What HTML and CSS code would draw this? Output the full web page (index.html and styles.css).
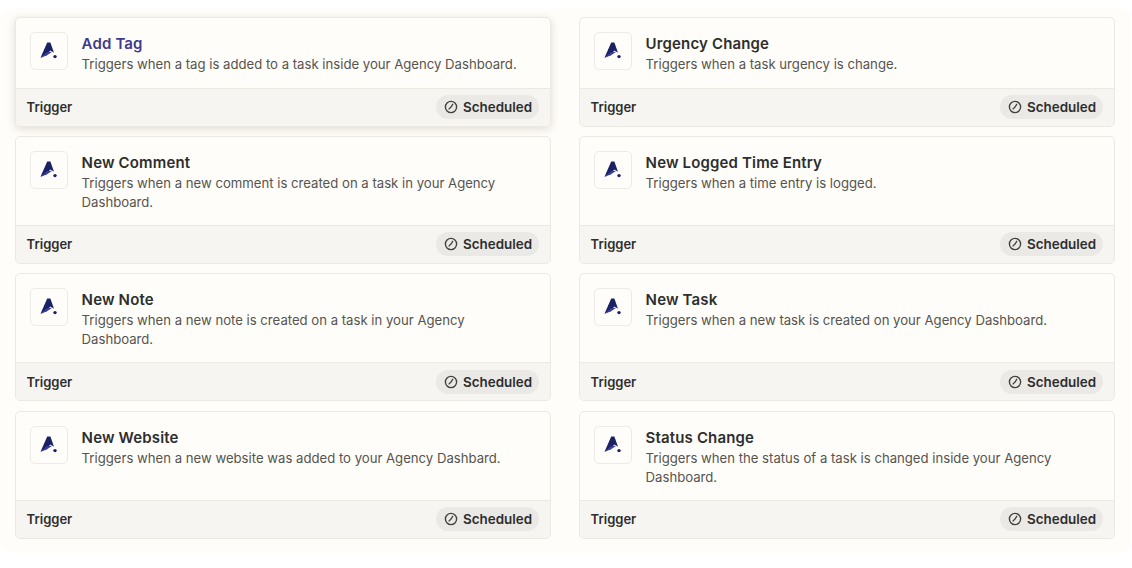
FILE: index.html
```html
<!DOCTYPE html>
<html lang="en">
<head>
<meta charset="utf-8">
<title>Triggers</title>
<link rel="stylesheet" href="styles.css">
</head>
<body>
<svg class="defs" width="0" height="0" aria-hidden="true">
  <defs>
    <symbol id="logo" viewBox="0 0 20 20">
      <path d="M8.2 1.5h3.2l3.6 10.2-3.5-2.2-4.6 4.2-5.4 3z" fill="#1b2264"/>
      <path d="M1.5 17l6.6-6 5.2-.2-5.2 3.4z" fill="#3a3f9e"/>
      <circle cx="16" cy="15.6" r="1.7" fill="#1b2264"/>
    </symbol>
    <symbol id="clock" viewBox="0 0 14 14">
      <circle cx="7" cy="7" r="5.6" fill="none" stroke="currentColor" stroke-width="1.4"/>
      <path d="M9 3.8 7 7 4.6 9.4" fill="none" stroke="currentColor" stroke-width="1.3"/>
    </symbol>
  </defs>
</svg>
<main class="panel">
  <article class="card card-active">
    <div class="card-body">
      <div class="app-icon"><svg class="logo"><use href="#logo"/></svg></div>
      <div class="card-text">
        <h3 class="card-title title-link">Add Tag</h3>
        <p class="card-desc">Triggers when a tag is added to a task inside your Agency Dashboard.</p>
      </div>
    </div>
    <div class="card-foot"><span class="kind">Trigger</span><span class="pill"><svg class="clock"><use href="#clock"/></svg>Scheduled</span></div>
  </article>
  <article class="card">
    <div class="card-body">
      <div class="app-icon"><svg class="logo"><use href="#logo"/></svg></div>
      <div class="card-text">
        <h3 class="card-title">Urgency Change</h3>
        <p class="card-desc">Triggers when a task urgency is change.</p>
      </div>
    </div>
    <div class="card-foot"><span class="kind">Trigger</span><span class="pill"><svg class="clock"><use href="#clock"/></svg>Scheduled</span></div>
  </article>
  <article class="card">
    <div class="card-body">
      <div class="app-icon"><svg class="logo"><use href="#logo"/></svg></div>
      <div class="card-text">
        <h3 class="card-title">New Comment</h3>
        <p class="card-desc">Triggers when a new comment is created on a task in your Agency Dashboard.</p>
      </div>
    </div>
    <div class="card-foot"><span class="kind">Trigger</span><span class="pill"><svg class="clock"><use href="#clock"/></svg>Scheduled</span></div>
  </article>
  <article class="card">
    <div class="card-body">
      <div class="app-icon"><svg class="logo"><use href="#logo"/></svg></div>
      <div class="card-text">
        <h3 class="card-title">New Logged Time Entry</h3>
        <p class="card-desc">Triggers when a time entry is logged.</p>
      </div>
    </div>
    <div class="card-foot"><span class="kind">Trigger</span><span class="pill"><svg class="clock"><use href="#clock"/></svg>Scheduled</span></div>
  </article>
  <article class="card">
    <div class="card-body">
      <div class="app-icon"><svg class="logo"><use href="#logo"/></svg></div>
      <div class="card-text">
        <h3 class="card-title">New Note</h3>
        <p class="card-desc">Triggers when a new note is created on a task in your Agency Dashboard.</p>
      </div>
    </div>
    <div class="card-foot"><span class="kind">Trigger</span><span class="pill"><svg class="clock"><use href="#clock"/></svg>Scheduled</span></div>
  </article>
  <article class="card">
    <div class="card-body">
      <div class="app-icon"><svg class="logo"><use href="#logo"/></svg></div>
      <div class="card-text">
        <h3 class="card-title">New Task</h3>
        <p class="card-desc">Triggers when a new task is created on your Agency Dashboard.</p>
      </div>
    </div>
    <div class="card-foot"><span class="kind">Trigger</span><span class="pill"><svg class="clock"><use href="#clock"/></svg>Scheduled</span></div>
  </article>
  <article class="card">
    <div class="card-body">
      <div class="app-icon"><svg class="logo"><use href="#logo"/></svg></div>
      <div class="card-text">
        <h3 class="card-title">New Website</h3>
        <p class="card-desc">Triggers when a new website was added to your Agency Dashbard.</p>
      </div>
    </div>
    <div class="card-foot"><span class="kind">Trigger</span><span class="pill"><svg class="clock"><use href="#clock"/></svg>Scheduled</span></div>
  </article>
  <article class="card">
    <div class="card-body">
      <div class="app-icon"><svg class="logo"><use href="#logo"/></svg></div>
      <div class="card-text">
        <h3 class="card-title">Status Change</h3>
        <p class="card-desc">Triggers when the status of a task is changed inside your Agency Dashboard.</p>
      </div>
    </div>
    <div class="card-foot"><span class="kind">Trigger</span><span class="pill"><svg class="clock"><use href="#clock"/></svg>Scheduled</span></div>
  </article>
</main>
</body>
</html>
```
FILE: styles.css
```css
* { box-sizing: border-box; }
html, body { margin: 0; padding: 0; background: #fff; }
body {
  font-family: Inter, "Liberation Sans", sans-serif;
  color: #2d2e2e;
  height: 568px;
  overflow: hidden;
  padding-top: 8px;
}
.defs { position: absolute; }
.panel {
  width: 1130px;
  height: 545px;
  background: #fffdf9;
  border-radius: 10px;
  padding: 8.67px 15px 0;
  display: grid;
  grid-template-columns: 536px 536px;
  grid-template-rows: 110px 128px 128px 128px;
  column-gap: 28px;
  row-gap: 9.33px;
}
.card {
  display: flex;
  flex-direction: column;
  border: 1px solid #ece9e3;
  border-radius: 5px;
  background: #fffdf9;
  overflow: hidden;
}
.card-active { box-shadow: 0 2px 8px rgba(60, 50, 30, 0.16); }
.card-body {
  flex: 1;
  display: flex;
  gap: 13.6px;
  padding: 14px 24px 0 14px;
}
.app-icon {
  flex: none;
  width: 38px;
  height: 38px;
  border: 1px solid #eeebe6;
  border-radius: 5px;
  display: flex;
  align-items: center;
  justify-content: center;
}
.logo { width: 20px; height: 20px; }
.card-text { min-width: 0; }
.card-title {
  margin: 0;
  font-size: 15px;
  font-weight: 600;
  line-height: 24px;
  letter-spacing: 0.01em;
}
.title-link { color: #3d3a8c; }
.card-desc {
  margin: -1px 0 0;
  font-size: 13.15px;
  line-height: 19px;
  color: #55544f;
}
.card-foot {
  flex: none;
  height: 38px;
  border-top: 1px solid #ece9e3;
  background: #f7f5f2;
  display: flex;
  align-items: center;
  justify-content: space-between;
  padding: 0 11px 0 10.6px;
}
.kind { font-size: 13px; font-weight: 600; }
.pill {
  display: flex;
  align-items: center;
  gap: 5px;
  height: 24px;
  padding: 0 7px 0 8px;
  border-radius: 12px;
  background: #ebe9e5;
  font-size: 13.4px;
  font-weight: 600;
}
.clock { width: 14px; height: 14px; color: #44443f; }
```
